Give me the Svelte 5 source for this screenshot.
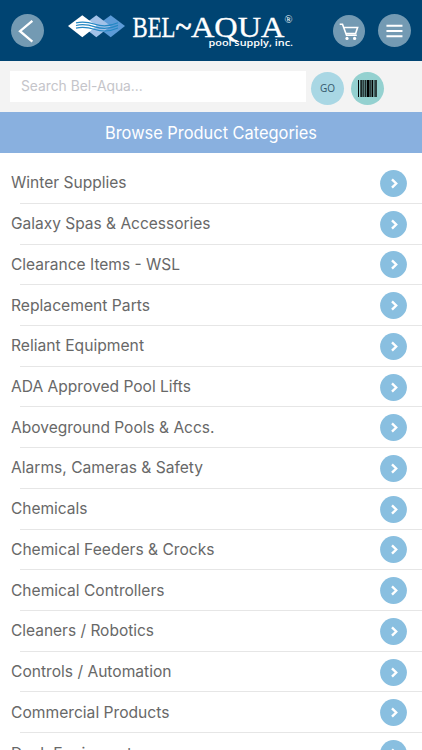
<script>
  const categories = [
    { name: 'Winter Supplies', width: 115.5 },
    { name: 'Galaxy Spas & Accessories', width: 199.5 },
    { name: 'Clearance Items - WSL', width: 169 },
    { name: 'Replacement Parts', width: 139 },
    { name: 'Reliant Equipment', width: 133 },
    { name: 'ADA Approved Pool Lifts', width: 180 },
    { name: 'Aboveground Pools & Accs.', width: 203.5 },
    { name: 'Alarms, Cameras & Safety', width: 192 },
    { name: 'Chemicals', width: 76.5 },
    { name: 'Chemical Feeders & Crocks', width: 203.5 },
    { name: 'Chemical Controllers', width: 153.5 },
    { name: 'Cleaners / Robotics', width: 143 },
    { name: 'Controls / Automation', width: 160.5 },
    { name: 'Commercial Products', width: 158.5 },
    { name: 'Deck Equipment', width: 121 }
  ];

  // x offset and width of each barcode stripe
  const bars = [
    [0, 1], [2, 0.6], [3.2, 1.3], [5.2, 0.7], [6.6, 1.2], [8.6, 3],
    [12.3, 0.7], [13.5, 1.6], [15.8, 0.7], [17.1, 0.7], [18.3, 0.8]
  ];

  let query = $state('');
</script>

<div class="app">
  <header class="topbar">
    <button class="round back" aria-label="Back">
      <svg width="34" height="34" viewBox="0 0 34 34">
        <path d="M22 6.5 9.3 17.2 22 28" />
      </svg>
    </button>

    <svg class="logo" width="228" height="44" viewBox="66 8.5 228 44" role="img" aria-label="Bel-Aqua pool supply, inc.">
      <path d="M96 25.6 110.7 14.7 125 25.6 110.7 36.7z" fill="#5c9bd7" />
      <path d="M82 25.6 96.3 14.7 110.7 25.6 96.3 36.7z" fill="#a2c2e8" />
      <path d="M68 25.6 82.3 14.7 96.7 25.6 82.3 36.7z" fill="#fff" />
      <g class="waves">
        <path d="M76 22.4c7-1.8 13-.6 19 1.4 8 2.6 15 2 23-1.5" />
        <path d="M76 25c7-1.8 13-.6 19 1.4 8 2.6 15 2 23-1.5" />
        <path d="M76 27.6c7-1.8 13-.6 19 1.4 8 2.6 15 2 23-1.5" />
      </g>
      <g class="brand">
        <text x="132.5" y="36.3" font-size="30" textLength="43" lengthAdjust="spacingAndGlyphs">BEL</text>
        <text class="tilde" x="175.5" y="36" font-size="30" textLength="16" lengthAdjust="spacingAndGlyphs">~</text>
        <text x="191" y="36.3" font-size="30" textLength="93.5" lengthAdjust="spacingAndGlyphs">AQUA</text>
        <text class="mark" x="284.5" y="22.5" font-size="10.5">®</text>
      </g>
      <text class="tagline" x="208.5" y="45.6" textLength="84.5" lengthAdjust="spacingAndGlyphs">pool supply, inc.</text>
    </svg>

    <button class="round cart" aria-label="Cart">
      <svg width="32" height="32" viewBox="0 0 32 32">
        <path d="M6.7 9.3h2.8l4 11h10.3M10.6 12.5h14l-2 6h-9.6" />
        <circle cx="14" cy="23.4" r="1.6" />
        <circle cx="21.6" cy="23.4" r="1.6" />
      </svg>
    </button>
    <button class="round menu" aria-label="Menu">
      <svg width="34" height="34" viewBox="0 0 34 34">
        <path d="M8.7 11.5h16.5M8.7 17h16.5M8.7 22.5h16.5" />
      </svg>
    </button>
  </header>

  <div class="search">
    <input type="text" placeholder="Search Bel-Aqua..." bind:value={query} />
    <button class="round go">GO</button>
    <button class="round scan" aria-label="Scan barcode">
      <svg width="19" height="17" viewBox="0 0 19 17">
        {#each bars as [x, width]}
          <rect {x} y="0" {width} height="17" />
        {/each}
      </svg>
    </button>
  </div>

  <h1>
    <svg width="222" height="30">
      <text x="5" y="21.3" textLength="212" lengthAdjust="spacingAndGlyphs">Browse Product Categories</text>
    </svg>
  </h1>

  <ul>
    {#each categories as category}
      <li>
        <svg class="name" width="220" height="26">
          <text x="0" y="18" textLength={category.width} lengthAdjust="spacingAndGlyphs">{category.name}</text>
        </svg>
        <svg class="arrow" width="27" height="27" viewBox="0 0 27 27">
          <circle cx="13.5" cy="13.5" r="13.4" />
          <path d="m12 9.4 4.2 4.1-4.2 4.1" />
        </svg>
      </li>
    {/each}
  </ul>
</div>

<style>
  :global(body) {
    overflow: hidden;
    background: #fff;
  }

  .app {
    height: 750px;
    overflow: hidden;
    font-family: Inter, 'Liberation Sans', sans-serif;
  }

  .topbar {
    display: flex;
    align-items: center;
    box-sizing: border-box;
    height: 61px;
    padding: 0 11px;
    background: #004472;
  }

  .round {
    display: flex;
    flex: none;
    align-items: center;
    justify-content: center;
    width: 33px;
    height: 33px;
    padding: 0;
    border: none;
    border-radius: 50%;
    background: #739ab3;
  }

  .round path {
    fill: none;
    stroke: #fff;
    stroke-width: 2;
  }

  .back path {
    stroke-width: 2.4;
  }

  .logo {
    margin-left: 22px;
  }

  .waves path {
    fill: none;
    stroke: #2488c4;
    stroke-width: 1.2;
  }

  .brand {
    fill: #fff;
    stroke: #fff;
    stroke-width: 0.3;
    font-family: 'Liberation Serif', serif;
  }

  .tilde {
    stroke-width: 0.8;
  }

  .mark {
    stroke: none;
  }

  .tagline {
    fill: #fff;
    font: 600 9.5px 'Open Sans', sans-serif;
  }

  .cart {
    width: 32px;
    height: 32px;
    margin-left: auto;
  }

  .cart path {
    stroke-width: 1.6;
  }

  .cart circle {
    fill: #fff;
  }

  .menu {
    margin-left: 13px;
  }

  .search {
    display: flex;
    align-items: center;
    box-sizing: border-box;
    height: 51px;
    padding: 3px 10px 0;
    background: #f3f3f3;
  }

  input {
    box-sizing: border-box;
    width: 296px;
    height: 31px;
    margin: -4px 0 0;
    padding: 0 11px;
    border: none;
    background: #fff;
    font: 13.8px Inter, sans-serif;
  }

  input::placeholder {
    color: #c5c5ca;
  }

  .go {
    margin-left: 5px;
    background: #a9d7e4;
    color: #34586a;
    font: 10px 'Open Sans', sans-serif;
  }

  .scan {
    margin-left: 7px;
    background: #94d1d0;
  }

  h1 {
    display: flex;
    align-items: center;
    justify-content: center;
    height: 41px;
    margin: 0;
    background: #89b0df;
    font-size: 17px;
    font-weight: 400;
  }

  h1 text {
    fill: #fff;
  }

  ul {
    margin: 0;
    padding: 10.1px 0 0;
    list-style: none;
  }

  li {
    display: flex;
    align-items: center;
    justify-content: space-between;
    box-sizing: border-box;
    height: 40.72px;
    padding: 0 15px 0 11px;
    background: linear-gradient(#e6e6e6, #e6e6e6) 20px 100% / 100% 1px no-repeat;
  }

  .name text {
    fill: #686868;
    font-size: 16px;
  }

  .arrow circle {
    fill: #89bfe0;
  }

  .arrow path {
    fill: none;
    stroke: #fff;
    stroke-width: 2.4;
  }
</style>
